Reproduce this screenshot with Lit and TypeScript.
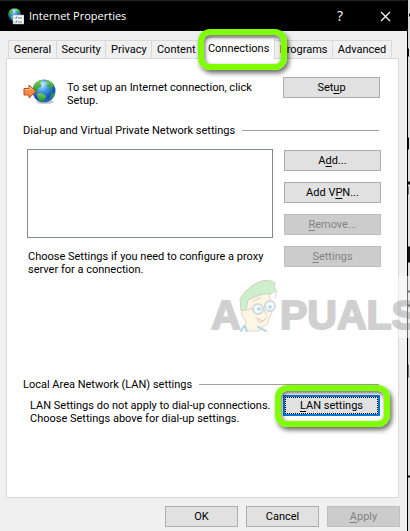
import { LitElement, html, svg, css } from "lit";
import { customElement, state } from "lit/decorators.js";

const tabs = ["General", "Security", "Privacy", "Content", "Connections", "Programs", "Advanced"];

const globe = svg`
  <defs>
    <radialGradient id="sea" cx=".4" cy=".25" r=".8">
      <stop offset="0" stop-color="#b9ecff"/><stop offset=".35" stop-color="#4398e8"/>
      <stop offset=".75" stop-color="#174dad"/><stop offset="1" stop-color="#3c79c8"/>
    </radialGradient>
    <linearGradient id="land" x2="0" y2="1"><stop offset="0" stop-color="#7ccf58"/><stop offset="1" stop-color="#178a2c"/></linearGradient>
  </defs>
  <circle cx="12" cy="12" r="11.5" fill="url(#sea)"/>
  <path d="M2 6Q5 1 10 1Q10 3 8 4L10 6Q9 9 6 9L5 13L2 15Q0 11 2 6Z" fill="url(#land)"/>
  <path d="M14 1Q20 2 22 7L20 9Q21 12 19 11L17 7L14 5Z" fill="url(#land)"/>
  <path d="M5 15Q9 13 13 16Q15 17 13 20L11 23Q7 22 6 19Z" fill="url(#land)"/>
  <path d="M19 15L23 13Q22 18 18 20Z" fill="#279b3b"/>
  <path d="M8 3Q13 1 17 5Q13 5 10 8Z" fill="#fff" opacity=".3"/>`;

@customElement("app-root")
export class AppRoot extends LitElement {
  @state() private active = "Connections";

  static styles = css`
    :host {
      display: block;
      position: relative;
      overflow: hidden;
      font: 11px/13px Roboto, "DejaVu Sans Condensed", sans-serif;
      color: #000;
    }
    * { box-sizing: border-box; }
    p, h1, h2 { margin: 0; font: inherit; }
    .desktop { display: grid; grid-template-columns: 1fr 2px; background: #ddd; min-height: 100vh; }
    .window { display: flex; flex-direction: column; background: #f0f0f0; border-right: 1px solid #000; min-width: 0; }
    .edge { width: 2px; height: 100%; }
    .title { display: flex; align-items: center; height: 31px; padding: 0 16px 0 7px; background: #000; color: #fff; border-top: 1px solid #222; }
    .title h1 { flex: 1; font: 11px/16px "Open Sans", "Noto Sans", sans-serif; padding-left: 5px; }
    .title button { border: 0; padding: 0; background: none; color: #fff; display: flex; align-items: center; justify-content: center; width: 12px; height: 28px; font: 14px/16px "Open Sans", sans-serif; }
    .title button + button { margin-left: 33px; }
    .tabs { display: flex; align-items: flex-end; height: 27px; padding: 0 15px 0 8px; }
    .tab { flex: 1 1 auto; position: relative; height: 18px; padding: 0 4px; border: 1px solid #d9d9d9; border-bottom: 0; border-left-width: 0; background: #f0f0f0; font: inherit; color: inherit; white-space: nowrap; }
    .tab:first-child { border-left-width: 1px; }
    .tab.on { height: 22px; padding: 0 4px 0 6px; background: #fff; margin-bottom: -1px; z-index: 2; }
    .panel { margin: 0 8px 0 6px; border: 1px solid #d9d9d9; background: #fff; padding: 18px 17px 72px 16px; }
    .row { display: grid; grid-template-columns: 1fr 97px; align-items: start; }
    .intro { padding-right: 1px; }
    .connect { display: flex; gap: 11px; padding-top: 4px; height: 32px; }
    .globe { flex: none; margin-top: -2px; }
    .heading { display: flex; align-items: center; gap: 7px; white-space: nowrap; }
    .heading::after { content: ""; flex: 1; border-top: 1px solid #a0a0a0; margin-right: 2px; }
    .vpn-heading { margin-top: 15px; }
    .vpn { margin-top: 12px; column-gap: 11px; padding-left: 4px; }
    .list { height: 89px; border: 1px solid #828790; background: #fff; }
    .note { margin-top: 12px; white-space: nowrap; padding-left: 1px; }
    .stack { display: grid; gap: 11px; padding-top: 1px; }
    .lan-heading { margin-top: 102px; }
    .lan { margin-top: 4px; padding: 0 1px 0 7px; white-space: nowrap; }
    .lan p { padding-top: 4px; }
    .btn { position: relative; width: 100%; height: 21px; padding: 0; border: 1px solid #adadad; background: #e1e1e1; font: inherit; color: #000; }
    .btn:disabled { background: #ccc; border-color: #bfbfbf; color: #838383; }
    .btn.focus { border: 2px solid #0078d7; outline: 1px dotted #000; outline-offset: -3px; }
    .ring { position: absolute; border: 6px solid #80ff00; border-radius: 12px; box-shadow: 2px 3px 5px #0009, inset 1px 2px 4px #0009; pointer-events: none; z-index: 3; }
    .tab .ring { inset: -9px -13px -11px -3px; }
    .btn .ring { inset: -12px -12px -13px -10px; }
    .footer { display: flex; justify-content: flex-end; gap: 8px; padding: 8px 7px 5px; }
    .footer .btn { width: 73px; }
    u { text-underline-offset: 2px; text-decoration-thickness: 1px; }
    .mark { position: absolute; left: 210px; top: 276px; pointer-events: none; }
    .mark text { font: bold 41px "Liberation Sans", sans-serif; fill: #777; stroke: #777; stroke-width: 2px; stroke-linejoin: round; }
  `;

  render() {
    return html`
      <div class="desktop">
        <main class="window">
          <header class="title">
            <svg width="17" height="18" viewBox="0 0 17 18" aria-hidden="true">
              <g transform="translate(1 1) scale(.56)">${globe}</g>
              <path d="M6 8h11v9H6z" fill="#f4f4f4" stroke="#aaa" stroke-width=".5"/>
              <path d="M8 10.5l1 1 1-2M8 14.5l1 1 1-2" fill="none" stroke="#3778b7"/>
              <path d="M11 11h4M11 15h4" stroke="#777"/>
            </svg>
            <h1>Internet Properties</h1>
            <button aria-label="Help">?</button>
            <button aria-label="Close"><svg width="11" height="11" viewBox="0 0 11 11"><path d="M1 1l9 9M10 1l-9 9" stroke="#fff" stroke-width="1.2"/></svg></button>
          </header>
          <div class="tabs" role="tablist">
            ${tabs.map((t) => html`<button role="tab" class="tab ${t === this.active ? "on" : ""}"
              aria-selected=${t === this.active ? "true" : "false"} @click=${() => (this.active = t)}>${t}${t === "Connections" ? html`<span class="ring"></span>` : ""}</button>`)}
          </div>
          <section class="panel" role="tabpanel">
            <div class="row intro">
              <div class="connect">
                <svg class="globe" width="33" height="25" viewBox="0 0 33 25" aria-hidden="true">
                  <ellipse cx="22" cy="23" rx="9" ry="2" fill="#999" opacity=".5"/>
                  <g transform="translate(9)">${globe}</g>
                  <path d="M1 9.500H6V6L13 12.500L6 19V16H1Z" fill="#f58a45" stroke="#bd4c18"/>
                  <path d="M2 10.500H7V8L10 11" fill="none" stroke="#ffc08d"/>
                </svg>
                <p>To set up an Internet connection, click<br>Setup.</p>
              </div>
              <button class="btn">Set<u>u</u>p</button>
            </div>
            <h2 class="heading vpn-heading">Dial-up and Virtual Private Network settings</h2>
            <div class="row vpn">
              <div>
                <div class="list" role="listbox" aria-label="Dial-up and Virtual Private Network settings" tabindex="0"></div>
                <p class="note">Choose Settings if you need to configure a proxy<br>server for a connection.</p>
              </div>
              <div class="stack">
                <button class="btn">A<u>d</u>d...</button>
                <button class="btn">Add V<u>P</u>N...</button>
                <button class="btn" disabled><u>R</u>emove...</button>
                <button class="btn" disabled><u>S</u>ettings</button>
              </div>
            </div>
            <h2 class="heading lan-heading">Local Area Network (LAN) settings</h2>
            <div class="row lan">
              <p>LAN Settings do not apply to dial-up connections.<br>Choose Settings above for dial-up settings.</p>
              <button class="btn focus"><u>L</u>AN settings<span class="ring"></span></button>
            </div>
          </section>
          <footer class="footer">
            <button class="btn">OK</button>
            <button class="btn">Cancel</button>
            <button class="btn" disabled><u>A</u>pply</button>
          </footer>
        </main>
        <svg class="edge" width="2" height="531" viewBox="0 0 2 531" aria-hidden="true">
          <path d="M1 13h1v3h-1zM0 48h1v8h-1zM0 137h1v12h-1zM0 181h2v3h-2zM0 246h2v16h-2zM0 290h2v2h-2zM0 304h2v2h-2zM0 475h2v2h-2z" fill="#111"/>
          <path d="M0 364h1v13h-1zM0 186h1v8h-1z" fill="#777"/>
        </svg>
      </div>
      <svg class="mark" width="200" height="62" viewBox="0 0 200 62" aria-label="Appuals">
        <path d="M188 0h12v62h-12z" fill="#fff" opacity=".45"/>
        <g opacity=".34">
          <text x="1" y="53">A</text>
          <text x="70" y="53">PUALS</text>
        </g>
        <g opacity=".4" stroke-linejoin="round" stroke-linecap="round">
          <path d="M35 25L59 16L61 31L62 37L59 42Q59 49 53 51L49 55H35L36 46L32 40L31 31Z" fill="#ffe8ba" stroke="#b69b83"/>
          <path d="M31 34L30 23Q38 9 52 5Q60 3 65 7Q63 10 66 15L61 18Q47 17 38 24L36 34Z" fill="#86d982" stroke="#82907f"/>
          <path d="M62 17l5-2-2 7" fill="#fff" stroke="#aaa"/>
          <circle cx="48" cy="33" r="5" fill="#eefaff" stroke="#8ba2b2" stroke-width="2"/>
          <circle cx="60" cy="30" r="5" fill="#eefaff" stroke="#8ba2b2" stroke-width="2"/>
          <circle cx="49" cy="33" r="2" fill="#54a8ba"/><circle cx="60" cy="31" r="2" fill="#54a8ba"/>
          <path d="M43 32l-6 2M43 25l7-3M54 34l2 4M46 42l7 3 4-4M48 43q-1 5 5 2" fill="none" stroke="#ad8376"/>
          <path d="M34 50l-3 5M48 51l8 4M35 50l2 5" stroke="#4a9ccc" fill="none" stroke-width="2"/>
        </g>
      </svg>`;
  }
}
